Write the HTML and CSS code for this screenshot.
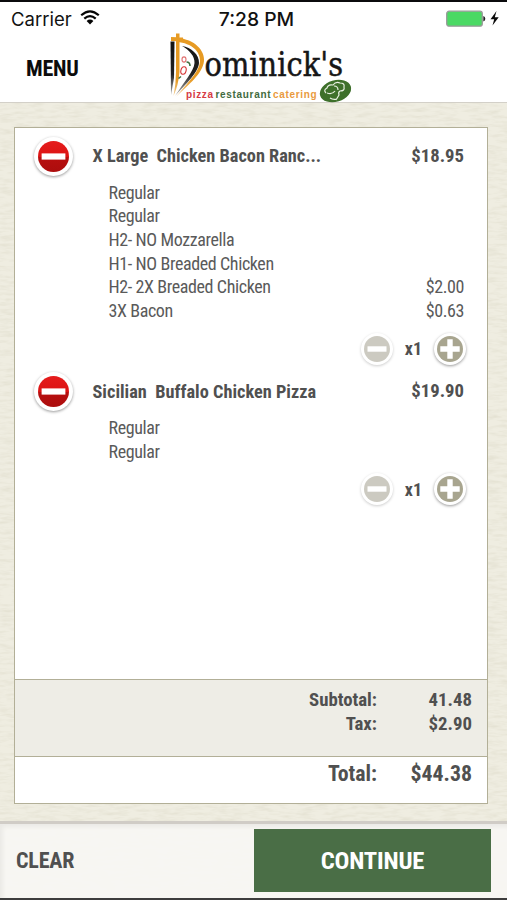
FILE: index.html
```html
<!DOCTYPE html>
<html lang="en">
<head>
<meta charset="utf-8">
<title>Dominick's – Order</title>
<link rel="stylesheet" href="styles.css">
</head>
<body>
<svg width="0" height="0" class="defs">
  <defs>
    <filter id="paper" x="0" y="0" width="100%" height="100%">
      <feTurbulence type="fractalNoise" baseFrequency="0.07 0.32" numOctaves="3" seed="8"/>
      <feColorMatrix type="matrix" values="0 0 0 0 0.5  0 0 0 0 0.47  0 0 0 0 0.33  0.4 0 0 0 -0.16"/>
    </filter>
    <linearGradient id="red" x1="0" y1="0" x2="0" y2="1">
      <stop offset="0" stop-color="#e51c1c"/><stop offset=".5" stop-color="#dc1414"/>
      <stop offset=".52" stop-color="#b80f0f"/><stop offset="1" stop-color="#ac0d0d"/>
    </linearGradient>
    <linearGradient id="blade" gradientUnits="userSpaceOnUse" x1="0" y1="8" x2="0" y2="65">
      <stop offset="0" stop-color="#111"/><stop offset=".6" stop-color="#222"/><stop offset="1" stop-color="#bbb"/>
    </linearGradient>
    <linearGradient id="crust" gradientUnits="userSpaceOnUse" x1="0" y1="8" x2="0" y2="65">
      <stop offset="0" stop-color="#e79b24"/><stop offset=".7" stop-color="#e79b24"/><stop offset="1" stop-color="#f3d3a0"/>
    </linearGradient>
    <symbol id="remove" viewBox="0 0 30 30">
      <circle cx="15" cy="15" r="15" fill="url(#red)"/>
      <rect x="3.5" y="12" width="23" height="6" fill="#fff"/>
    </symbol>
    <symbol id="minus" viewBox="0 0 26 26">
      <circle cx="13" cy="13" r="13" fill="#cccac1"/>
      <rect x="3.5" y="10.300" width="19" height="5.400" fill="#fff"/>
    </symbol>
    <symbol id="plus" viewBox="0 0 26 26">
      <circle cx="13" cy="13" r="13" fill="#a8a58f"/>
      <path d="M10.300 3.300h5.400v7H22.700v5.400h-7v7h-5.400v-7h-7v-5.400h7z" fill="#fff"/>
    </symbol>
  </defs>
</svg>
<div class="app">
  <svg class="texture"><rect width="100%" height="100%" filter="url(#paper)"/></svg>
  <header class="header">
    <div class="status">
      <div class="carrier">Carrier
        <svg width="20" height="15" viewBox="0 0 20 15" fill="none" stroke="#050505" stroke-width="2.200">
          <path d="M1.200 5.300Q10-2.700 18.800 5.300M4.300 8.600Q10 3.500 15.700 8.600"/><path d="M6.600 11Q10 8.200 13.400 11L10 14.600z" fill="#050505" stroke="none"/>
        </svg>
      </div>
      <div class="time">7:28 PM</div>
      <div class="power">
        <svg width="53" height="18" viewBox="0 0 53 18">
          <rect x=".7" y="1.200" width="35.600" height="15" rx="2.500" fill="#4bd964" stroke="#9a9a9a" stroke-width="1.300"/>
          <path d="M37.300 6q2 .5 2 2.700t-2 2.700z" fill="#222"/>
          <path d="M50.500 1L44.500 9.300h3.700L46.500 15.500l6.200-8.200h-3.900z" fill="#0a0a0a"/>
        </svg>
      </div>
    </div>
    <div class="nav">
      <a class="menu">MENU</a>
      <svg class="logo" width="190" height="74" viewBox="0 0 190 74">
        <path d="M6.500 9.500L10.500 9.500 10 46 7 63z" fill="url(#blade)"/>
        <path d="M18 14C27 15 35.500 23 35 31C34.500 40 22 52 11 64C20 50 30 39 30.500 31C31 24 25 18 18 14z" fill="url(#blade)"/>
        <path d="M13 6C31 7 41 19 40 29C38.500 42 25 52 12 65C23 51 35.500 40 36 29C36.500 20 28 11 13 10z" fill="url(#crust)"/>
        <path d="M12 1.500L15.500 1.500 15.500 40Q14.500 53 9.500 64Q12 52 12 40zM7 5L19 5.500 19 9.500 7 9z" fill="url(#crust)"/>
        <g fill="none" stroke-width="1.100"><ellipse cx="20" cy="27.500" rx="2" ry="2.600" stroke="#e07070"/><ellipse cx="19.500" cy="38.500" rx="2.600" ry="3.800" stroke="#d63838" transform="rotate(15 19.500 38.500)"/><path d="M22.500 30q3.500 0 3.500 4M14.500 46.500l2.500-2" stroke="#3f7040" stroke-width="1.600"/></g>
        <text class="brand" x="40.500" y="43.500" textLength="138.500" lengthAdjust="spacingAndGlyphs">ominick's</text>
        <text class="tag" y="65.500"><tspan x="22" textLength="27" fill="#d63a44">pizza</tspan><tspan x="51.500" textLength="55" fill="#426b41">restaurant</tspan><tspan x="109" textLength="43.500" fill="#e99a3d">catering</tspan></text>
        <ellipse cx="171.500" cy="59" rx="16" ry="10.800" fill="#3e702b" transform="rotate(-17 171.500 59)"/>
        <path d="M162 61q-3-3 1-5 1-4 6-3 3-4 7-2 5 0 4 4 1 4-4 4-2 1-1 4l-3 5M163 61q5 2 8-2M170 54q4 0 4 4M166 66q3 2 7 1" fill="none" stroke="#e8f0e3" stroke-width="1.200"/>
      </svg>
    </div>
  </header>

  <main class="ticket">
    <div class="items">
      <section class="item">
        <div class="row head">
          <span class="badge big"><svg><use href="#remove"/></svg></span>
          <span class="name">X Large&nbsp; Chicken Bacon Ranc...</span><span class="price">$18.95</span>
        </div>
        <ul class="mods">
          <li><span>Regular</span></li>
          <li><span>Regular</span></li>
          <li><span>H2- NO Mozzarella</span></li>
          <li><span>H1- NO Breaded Chicken</span></li>
          <li><span>H2- 2X Breaded Chicken</span><span class="amt">$2.00</span></li>
          <li><span>3X Bacon</span><span class="amt">$0.63</span></li>
        </ul>
        <div class="qty"><span class="badge"><svg><use href="#minus"/></svg></span><b>x1</b><span class="badge"><svg><use href="#plus"/></svg></span></div>
      </section>
      <section class="item">
        <div class="row head">
          <span class="badge big"><svg><use href="#remove"/></svg></span>
          <span class="name">Sicilian&nbsp; Buffalo Chicken Pizza</span><span class="price">$19.90</span>
        </div>
        <ul class="mods">
          <li><span>Regular</span></li>
          <li><span>Regular</span></li>
        </ul>
        <div class="qty"><span class="badge"><svg><use href="#minus"/></svg></span><b>x1</b><span class="badge"><svg><use href="#plus"/></svg></span></div>
      </section>
    </div>
    <div class="sums">
      <div class="sum"><span>Subtotal:</span><span>41.48</span></div>
      <div class="sum"><span>Tax:</span><span>$2.90</span></div>
    </div>
    <div class="total"><div class="sum"><span>Total:</span><span>$44.38</span></div></div>
  </main>

  <footer class="footer">
    <a class="clear">CLEAR</a>
    <a class="continue">CONTINUE</a>
  </footer>
</div>
</body>
</html>
```
FILE: styles.css
```css
* { box-sizing: border-box; }
body { margin: 0; }
.defs { position: absolute; }
.app {
  position: relative;
  width: 507px;
  height: 900px;
  display: flex;
  flex-direction: column;
  overflow: hidden;
  background: #efede1;
  color: #505050;
  font-family: "Roboto Condensed", Roboto, sans-serif;
  font-stretch: 75%;
}
.texture { position: absolute; inset: 0; width: 100%; height: 100%; }
.header, .ticket, .footer { position: relative; }
.header {
  height: 103px;
  border-top: 2px solid #0b0b0d;
  border-bottom: 1px solid #d3d0c8;
  background: #fff;
}
.status {
  display: grid;
  grid-template-columns: 1fr 1fr 1fr;
  align-items: center;
  height: 32px;
  padding: 0 8px 0 11px;
  font: 19px/32px Inter, sans-serif;
  font-stretch: 100%;
  color: #111;
}
.carrier { display: flex; gap: 8px; align-items: center; font-size: 18.5px; }
.carrier svg { margin-top: -2px; }
.time { padding: 1px 0 0 3px; text-align: center; font-weight: 500; font-size: 19.3px; }
.power { display: flex; justify-content: flex-end; }
.nav { display: flex; height: 68px; }
.menu {
  width: 164px;
  padding: 22px 0 0 26px;
  font-size: 22px;
  line-height: 26px;
  letter-spacing: -.2px;
  font-weight: 700;
  color: #0c0c0c;
}
.logo { flex: none; margin-top: -2px; overflow: visible; font-stretch: 100%; }
.brand { font-family: "DejaVu Serif", serif; font-size: 34px; fill: #161616; stroke: #161616; stroke-width: .5px; }
.tag { font: bold 10px "Liberation Sans", sans-serif; }

.ticket {
  display: flex;
  flex-direction: column;
  width: 474px;
  height: 677px;
  margin: 24px 0 0 14px;
  border: 1px solid #b2af97;
  background: #fff;
}
.items { height: 551px; padding-top: 8px; }
.item { height: 235.5px; padding: 0 23px 0 17px; }
.head {
  display: flex;
  align-items: center;
  height: 40px;
  font-size: 18.3px;
  font-weight: 700;
}
.name { flex: 1; margin-left: 20px; }
.name, .price { margin-top: -1px; }
.price { font-size: 18.7px; }
.badge {
  display: grid;
  place-items: center;
  width: 32px;
  height: 32px;
  border-radius: 50%;
  background: #fff;
  box-shadow: 0 1px 3px #0006;
}
.badge svg { display: block; width: 26px; height: 26px; }
.badge.big { width: 39px; height: 39px; margin-left: 1.5px; }
.badge.big svg { width: 31px; height: 31px; }
.mods { list-style: none; margin: 4.5px 0 0 76.5px; padding: 0; font-size: 18px; letter-spacing: -.39px; color: #5a5a5a; }
.mods li { display: flex; justify-content: space-between; height: 23.7px; line-height: 24px; }
.qty { display: flex; justify-content: flex-end; align-items: center; gap: 12px; margin: 10px -2px 0 0; font-size: 18px; }
.qty .badge:first-child { box-shadow: 0 1px 3px #0003; }
.sums { height: 78px; padding-top: 8px; border: solid #b2af97; border-width: 1px 0; background: #eeede6; }
.sum { display: flex; justify-content: flex-end; padding-right: 15px; height: 23.7px; line-height: 24px; font-size: 18.8px; font-weight: 700; }
.sum span:last-child { width: 95px; text-align: right; }
.total { padding-top: 5px; }
.total .sum { font-size: 21.8px; }
.footer {
  display: flex;
  justify-content: space-between;
  height: 79px;
  margin-top: 17px;
  padding: 7px 16px;
  border-top: 3px solid #d0ccc6;
  border-bottom: 2px solid #3d3d3d;
  background: #f8f7f3f0;
  box-shadow: inset 3px 3px 4px #0000000d;
}
.clear { align-self: center; margin-top: -1px; font-size: 22px; letter-spacing: -.2px; font-weight: 700; }
.continue {
  width: 237px;
  height: 63px;
  margin-top: -2px;
  background: #4a6e46;
  color: #fff;
  text-align: center;
  font-size: 24.7px;
  letter-spacing: -.2px;
  line-height: 64px;
  font-weight: 700;
}
```
